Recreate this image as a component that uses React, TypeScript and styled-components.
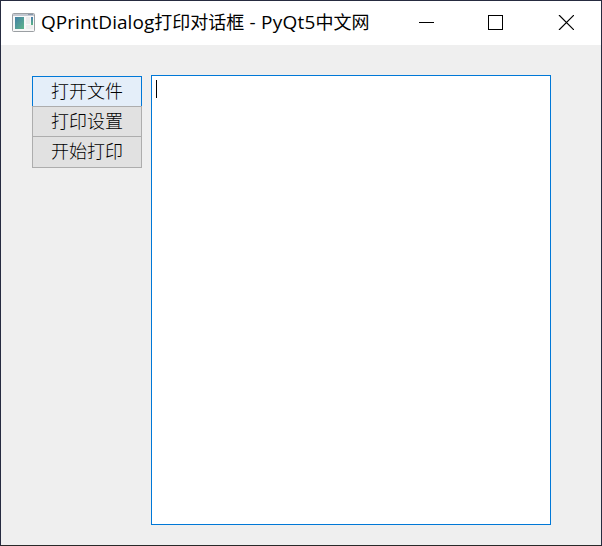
import React from 'react';
import styled, { createGlobalStyle } from 'styled-components';

const GlobalStyle = createGlobalStyle`
  * {
    box-sizing: border-box;
  }

  body {
    margin: 0;
    overflow: hidden;
  }
`;

const Window = styled.div`
  width: 602px;
  height: 546px;
  display: flex;
  flex-direction: column;
  background-color: #efefef;
  border: 1px solid #262b40;
  border-bottom-color: #292929;
`;

const TitleBar = styled.header`
  height: 44px;
  flex: none;
  display: flex;
  align-items: center;
  padding: 0 0 2px 11px;
  background-color: #ffffff;
`;

const Title = styled.h1`
  flex: 1;
  display: flex;
  align-items: baseline;
  margin: 0 0 0 6px;
  font-family: 'Open Sans', 'Noto Sans CJK SC', sans-serif;
  font-size: 18px;
  font-weight: 400;
  line-height: 26px;
  white-space: pre;
  color: #000000;
`;

const Latin = styled.span<{ $spacing: number }>`
  font-size: 19px;
  letter-spacing: ${props => props.$spacing}px;
`;

const WindowButton = styled.button<{ $width: number }>`
  width: ${props => props.$width}px;
  height: 42px;
  display: flex;
  align-items: center;
  justify-content: center;
  padding: 1px 0 0;
  border: none;
  background: transparent;
  color: #000000;

  svg {
    display: block;
  }
`;

const Content = styled.main`
  flex: 1;
  display: flex;
  align-items: flex-start;
  gap: 9px;
  padding: 30px 0 0 31px;
`;

const ButtonColumn = styled.div`
  width: 110px;
  display: flex;
  flex-direction: column;
  margin-top: 1px;
`;

const PushButton = styled.button<{ $active?: boolean }>`
  height: 30px;
  padding: 0 0 3px;
  border: 1px solid ${props => (props.$active ? '#0078d7' : '#adadad')};
  border-bottom: none;
  background-color: ${props => (props.$active ? '#e4eef9' : '#e1e1e1')};
  font-family: 'Noto Sans CJK SC', sans-serif;
  font-size: 18px;
  font-weight: 300;
  line-height: 26px;
  color: #000000;

  &:last-child {
    height: 32px;
    padding-bottom: 4px;
    border-bottom: 1px solid #adadad;
  }
`;

const TextEdit = styled.div`
  width: 400px;
  height: 450px;
  padding: 4px;
  border: 1px solid #0078d7;
  background-color: #ffffff;
`;

const Caret = styled.div`
  width: 1px;
  height: 18px;
  background-color: #000000;
`;

const AppIcon = () => (
  <svg width="23" height="19" viewBox="0 0 23 19">
    <defs>
      <linearGradient id="pane" x1="0" y1="0" x2="1" y2="1">
        <stop offset="0" stopColor="#4380a6" />
        <stop offset="1" stopColor="#5fb58a" />
      </linearGradient>
      <linearGradient id="strip" x1="0" y1="0" x2="0" y2="1">
        <stop offset="0" stopColor="#4b7fae" />
        <stop offset="1" stopColor="#58b584" />
      </linearGradient>
    </defs>
    <rect x="0.5" y="0.5" width="22" height="18" rx="1" fill="#f8f8f8" stroke="#9b9fa3" />
    <rect x="1" y="1" width="21" height="2" fill="#c3c8d0" />
    <path d="M16 1.5h5" stroke="#8898ad" />
    <rect x="3" y="4" width="9" height="12" fill="url(#pane)" />
    <rect x="14" y="4" width="4" height="7" fill="#ececec" />
    <rect x="14" y="12" width="7" height="4" fill="#eeeeee" />
    <rect x="19" y="4" width="2" height="8" fill="url(#strip)" />
  </svg>
);

const actions = ['打开文件', '打印设置', '开始打印'];

const App = () => {
  return (
    <>
      <GlobalStyle />
      <Window>
        <TitleBar>
          <AppIcon />
          <Title>
            <Latin $spacing={0.03}>QPrintDialog</Latin>
            打印对话框
            <Latin $spacing={0.25}> - PyQt5</Latin>
            中文网
          </Title>
          <WindowButton aria-label="minimize" $width={69}>
            <svg width="15" height="15" shapeRendering="crispEdges">
              <path d="M0 7.5h15" stroke="currentColor" />
            </svg>
          </WindowButton>
          <WindowButton aria-label="maximize" $width={69}>
            <svg width="15" height="15" shapeRendering="crispEdges">
              <rect x="0.5" y="0.5" width="14" height="14" fill="none" stroke="currentColor" />
            </svg>
          </WindowButton>
          <WindowButton aria-label="close" $width={71}>
            <svg width="17" height="15">
              <path d="M2 0L17 15M17 0L2 15" stroke="currentColor" strokeWidth="1.2" />
            </svg>
          </WindowButton>
        </TitleBar>
        <Content>
          <ButtonColumn>
            {actions.map((label, index) => (
              <PushButton key={label} $active={index === 0}>
                {label}
              </PushButton>
            ))}
          </ButtonColumn>
          <TextEdit>
            <Caret />
          </TextEdit>
        </Content>
      </Window>
    </>
  );
};

export default App;
